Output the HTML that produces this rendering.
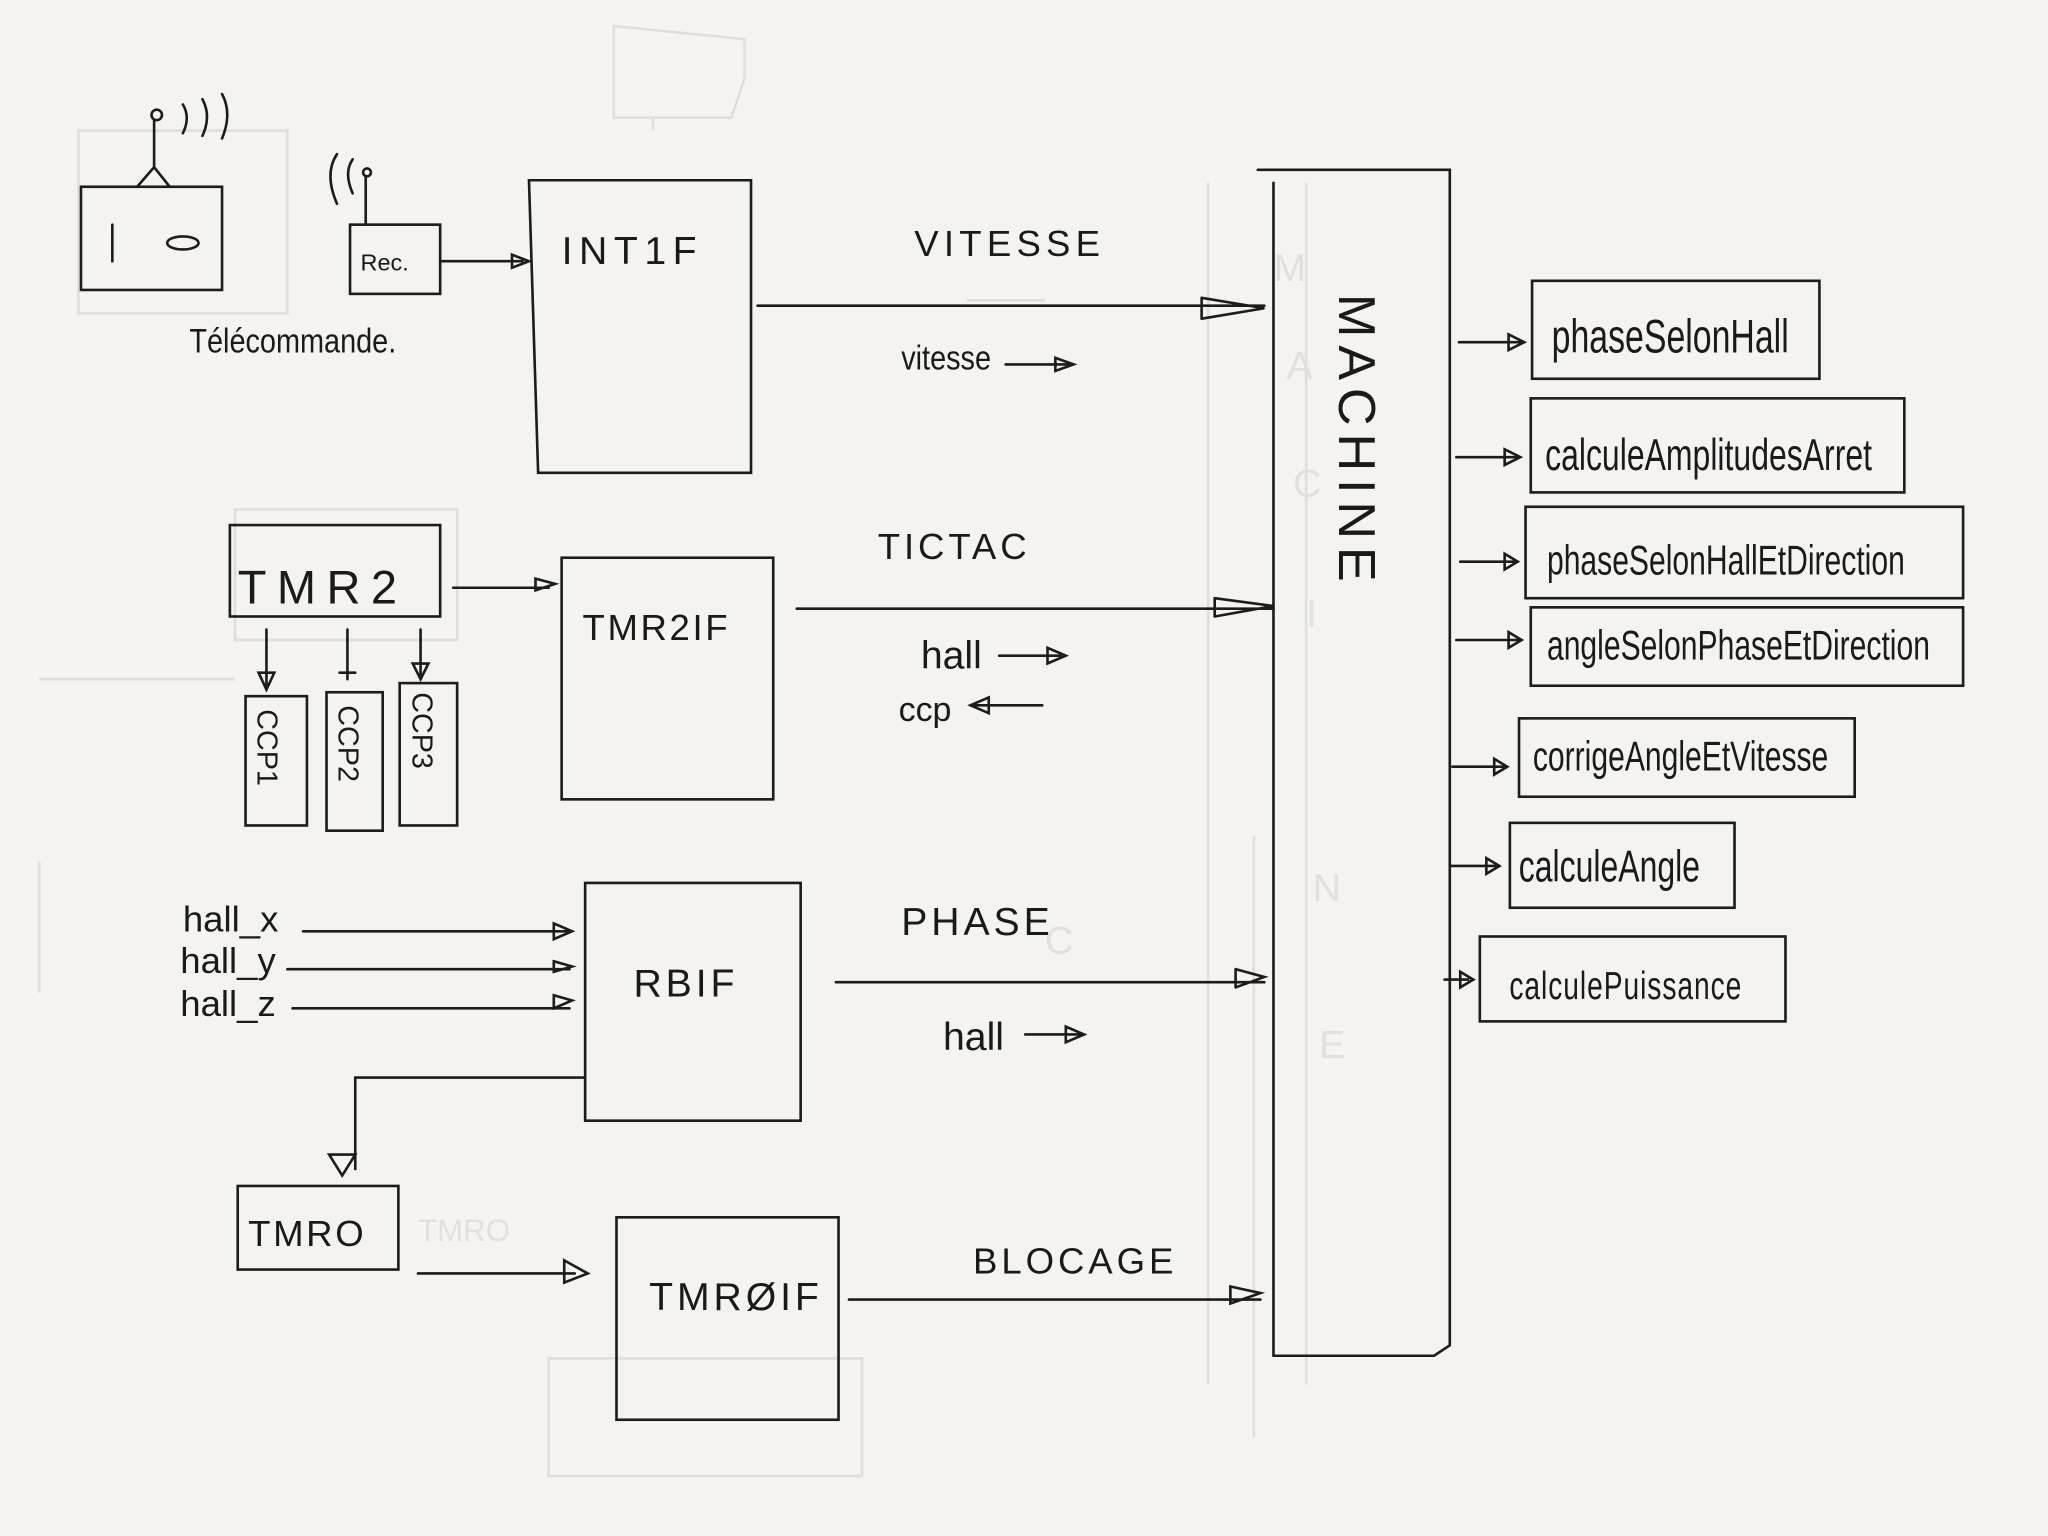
<!DOCTYPE html>
<html><head><meta charset="utf-8"><style>
html,body{margin:0;padding:0;background:#f4f3ef;}
svg{display:block}
text{font-family:"Liberation Sans",sans-serif;fill:#1a1a1a;}
text.g{fill:#e2e0db;}
</style></head><body>
<svg width="2048" height="1536" viewBox="0 0 1568 1176" xmlns="http://www.w3.org/2000/svg">
<rect width="1568" height="1176" fill="#f4f3ef"/>
<g fill="none" stroke="#e0ded9" stroke-width="2">
<path d="M470 20 V90 H560 L570 60 V30 Z M500 90 V100"/>
<path d="M925 140 V1060 M1000 140 V1060"/>
<rect x="60" y="100" width="160" height="140"/>
<rect x="180" y="390" width="170" height="100"/>
<path d="M30 520 H180 M30 660 V760"/>
<rect x="420" y="1040" width="240" height="90"/>
<path d="M960 640 V1100 M740 230 H800"/>
</g>
<g font-size="30">
<text class="g" style="fill:#e2e0db" x="975" y="215">M</text><text class="g" style="fill:#e2e0db" x="985" y="290">A</text><text class="g" style="fill:#e2e0db" x="990" y="380">C</text>
<text class="g" style="fill:#e2e0db" x="1000" y="480">I</text><text class="g" style="fill:#e2e0db" x="1005" y="690">N</text><text class="g" style="fill:#e2e0db" x="1010" y="810">E</text>
<text class="g" style="fill:#e2e0db" x="320" y="950" font-size="24">TMRO</text>
<text class="g" style="fill:#e2e0db" x="800" y="730">C</text>
</g>
<g fill="none" stroke="#1c1c1c" stroke-width="2" stroke-linecap="round">
<rect x="62" y="143" width="108" height="79"/>
<path d="M105 143 L118 128 L130 143 M118 128 V92"/>
<circle cx="120" cy="88" r="4"/>
<path d="M140 80 q6 10 0 22 M155 76 q7 13 0 28 M170 72 q8 15 0 34"/>
<path d="M86 172 V200"/>
<ellipse cx="140" cy="186" rx="12" ry="5"/>
<rect x="268" y="172" width="69" height="53"/>
<path d="M280 172 V135"/><circle cx="281" cy="132" r="3"/>
<path d="M258 118 q-10 15 0 38 M270 122 q-7 10 0 26"/>
<path d="M337 200 H400 M392 195 L405 200 L392 205Z"/>
<path d="M405 138 H575 V362 H412 Z"/>
<path d="M580 234 H968 M920 228 L968 236 L920 244 M920 228 V244"/>
<path d="M770 279 H820 M808 274 L822 279 L808 284Z"/>
<path d="M963 130 H1110 V1030 L1098 1038 H975 V140"/>
<path d="M1117 262 H1165 M1155 256 L1167 262 L1155 268Z"/>
<rect x="1173" y="215" width="220" height="75"/>
<path d="M1115 350 H1162 M1152 344 L1164 350 L1152 356Z"/>
<rect x="1172" y="305" width="286" height="72"/>
<path d="M1118 430 H1160 M1152 424 L1162 430 L1152 436Z"/>
<rect x="1168" y="388" width="335" height="70"/>
<path d="M1115 490 H1163 M1155 484 L1165 490 L1155 496Z"/>
<rect x="1172" y="465" width="331" height="60"/>
<path d="M1112 587 H1152 M1144 581 L1154 587 L1144 593Z"/>
<rect x="1163" y="550" width="257" height="60"/>
<path d="M1110 663 H1146 M1138 657 L1148 663 L1138 669Z"/>
<rect x="1156" y="630" width="172" height="65"/>
<path d="M1106 750 H1124 M1118 744 L1128 750 L1118 756Z"/>
<rect x="1133" y="717" width="234" height="65"/>
<rect x="176" y="402" width="161" height="70"/>
<path d="M347 450 H420 M410 443 L425 447 L410 452Z"/>
<path d="M204 482 V525 M198 515 L204 528 L210 515Z M266 482 V520 M260 515 H272 M322 482 V518 M316 508 L322 520 L328 508Z"/>
<rect x="188" y="533" width="47" height="99"/>
<rect x="250" y="530" width="43" height="106"/>
<rect x="306" y="523" width="44" height="109"/>
<rect x="430" y="427" width="162" height="185"/>
<path d="M610 466 H975 M930 458 L975 464 L930 472 M930 458 V472"/>
<path d="M765 502 H812 M802 496 L816 502 L802 508Z"/>
<path d="M745 540 H798 M757 534 L743 540 L757 546Z"/>
<path d="M232 713 H436 M424 707 L438 713 L424 719Z M220 742 H436 M424 736 L438 740 L424 744Z M224 772 H436 M424 762 L438 766 L424 772Z"/>
<path d="M448 676 H613 V858 H448 Z"/>
<path d="M640 752 H968 M946 742 L968 748 L946 756 M946 742 V756"/>
<path d="M785 792 H828 M816 786 L830 792 L816 798Z"/>
<path d="M448 825 H272 V895 M252 884 L262 900 L272 884Z"/>
<rect x="182" y="908" width="123" height="64"/>
<path d="M320 975 H440 M432 965 L450 975 L432 982Z"/>
<rect x="472" y="932" width="170" height="155"/>
<path d="M650 995 H965 M942 985 L965 990 L942 998Z"/>
</g>
<g font-size="30">
<text x="145" y="270" font-size="26" transform="translate(145 270) scale(0.85 1) translate(-145 -270)">Télécommande.</text>
<text x="276" y="207" font-size="18">Rec.</text>
<text x="430" y="202" font-size="30" letter-spacing="5">INT1F</text>
<text x="700" y="196" font-size="28" letter-spacing="4">VITESSE</text>
<text x="690" y="283" font-size="26" transform="translate(690 283) scale(0.85 1) translate(-690 -283)">vitesse</text>
<text x="182" y="462" font-size="36" letter-spacing="8">TMR2</text>
<text x="446" y="490" font-size="28" letter-spacing="2">TMR2IF</text>
<text x="672" y="428" font-size="28" letter-spacing="3">TICTAC</text>
<text x="705" y="512" font-size="30">hall</text>
<text x="688" y="552" font-size="26">ccp</text>
<text x="140" y="713" font-size="28">hall_x</text>
<text x="138" y="745" font-size="28">hall_y</text>
<text x="138" y="778" font-size="28">hall_z</text>
<text x="485" y="763" font-size="30" letter-spacing="3">RBIF</text>
<text x="690" y="716" font-size="30" letter-spacing="3">PHASE</text>
<text x="722" y="804" font-size="30">hall</text>
<text x="190" y="954" font-size="28" letter-spacing="2">TMRO</text>
<text x="497" y="1003" font-size="30" letter-spacing="3">TMRØIF</text>
<text x="745" y="975" font-size="28" letter-spacing="3">BLOCAGE</text>
<text transform="translate(1025 225) rotate(90)" font-size="40" letter-spacing="6">MACHINE</text>
<text transform="translate(197 543) rotate(90)" font-size="22">CCP1</text>
<text transform="translate(259 540) rotate(90)" font-size="22">CCP2</text>
<text transform="translate(316 530) rotate(90)" font-size="22">CCP3</text>
<g transform="scale(0.72 1)">
<text x="1650" y="270" font-size="36">phaseSelonHall</text>
<text x="1643" y="360" font-size="34">calculeAmplitudesArret</text>
<text x="1645" y="440" font-size="32">phaseSelonHallEtDirection</text>
<text x="1645" y="505" font-size="32">angleSelonPhaseEtDirection</text>
<text x="1630" y="590" font-size="32">corrigeAngleEtVitesse</text>
<text x="1615" y="675" font-size="34">calculeAngle</text>
<text x="1605" y="765" font-size="30" letter-spacing="1">calculePuissance</text>
</g>
</g>
</svg>
</body></html>
